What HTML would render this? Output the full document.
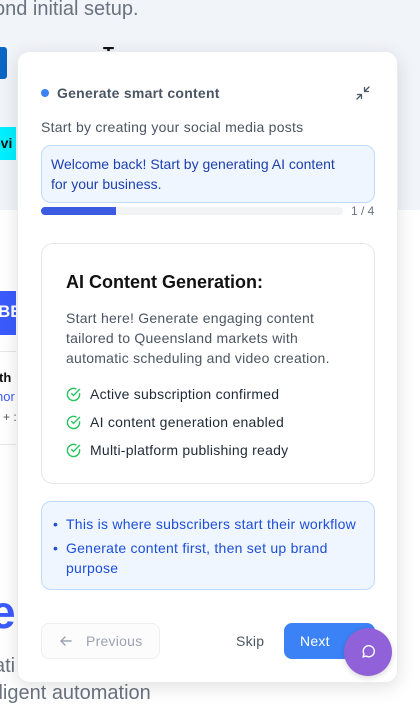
<!DOCTYPE html>
<html><head><style>
*{box-sizing:border-box;margin:0;padding:0}
body{width:420px;height:702px;overflow:hidden;font-family:"Liberation Sans",sans-serif;background:#fff;position:relative}
.bg{position:absolute;left:0;top:0;width:420px;height:210px;background:#f1f4f8}
.abs{position:absolute}
.card{position:absolute;left:17px;top:51px;width:381px;height:632px;background:#fff;border-radius:12px;box-shadow:0 4px 18px rgba(0,0,0,.12);border:1px solid #e9ecef}
.t{position:absolute;white-space:nowrap}
.ls{letter-spacing:0.25px}
</style></head><body>
<div class="bg"></div>
<div class="t" style="left:-6px;top:-2px;font-size:20px;color:#6b7280">ond initial setup.</div>
<div class="abs" style="left:0;top:47px;width:7px;height:32px;background:#0a66c2;border-radius:0 3px 3px 0"></div>
<div class="t" style="left:103px;top:44px;font-size:18px;font-weight:bold;color:#111">T</div>
<div class="abs" style="left:0;top:127px;width:16px;height:33px;background:#00f0ff"></div>
<div class="t" style="left:-4px;top:135px;font-size:14px;font-weight:bold;color:#111">-vi</div>
<div class="abs" style="left:0;top:291px;width:16px;height:44px;background:#3b5bfd"></div>
<div class="t" style="left:-2px;top:302px;font-size:17px;font-weight:bold;color:#fff">BE</div>
<div class="abs" style="left:0;top:351px;width:16px;height:1px;background:#e5e7eb"></div>
<div class="t" style="left:-6px;top:370px;font-size:13px;font-weight:bold;color:#111">rth</div>
<div class="t" style="left:-4px;top:389px;font-size:13px;color:#3b5bfd">nor</div>
<div class="t" style="left:3px;top:410px;font-size:12px;color:#555">+ :</div>
<div class="abs" style="left:0;top:444px;width:16px;height:1px;background:#e5e7eb"></div>
<div class="t" style="left:-10px;top:585px;font-size:46px;font-weight:bold;color:#3b5bfd">e</div>
<div class="t" style="left:-6px;top:655px;font-size:20px;color:#6b7280">ati</div>
<div class="t" style="left:-6px;top:682px;font-size:20px;color:#6b7280">lligent automation</div>

<div class="card"></div>
<div class="abs" style="left:41px;top:89px;width:8px;height:8px;border-radius:50%;background:#3b82f6"></div>
<div class="t ls" style="left:57px;top:85px;font-size:14px;font-weight:bold;color:#4b5563">Generate smart content</div>
<svg class="abs" style="left:355px;top:85px" width="16" height="16" viewBox="0 0 16 16" fill="none" stroke="#4b5563" stroke-width="1.3" stroke-linecap="round"><path d="M2 14l4.5-4.5M2.5 9.5h4v4M14 2L9.5 6.5M9.5 2.5v4h4"/></svg>
<div class="t ls" style="left:41px;top:119px;font-size:14px;color:#4b5563">Start by creating your social media posts</div>
<div class="abs" style="left:41px;top:145px;width:334px;height:58px;background:#eff6ff;border:1px solid #bfdbfe;border-radius:10px;padding:8px 25px 8px 9px;font-size:14px;line-height:20px;color:#1e40af">Welcome back! Start by generating AI content for your business.</div>
<div class="abs" style="left:41px;top:207px;width:302px;height:8px;background:#f1f3f5;border-radius:4px"></div>
<div class="abs" style="left:41px;top:207px;width:75px;height:8px;background:#3b5be0;border-radius:4px 0 0 4px"></div>
<div class="t" style="left:351px;top:204px;font-size:12px;color:#6b7280">1 / 4</div>

<div class="abs" style="left:41px;top:243px;width:334px;height:241px;border:1px solid #e5e7eb;border-radius:12px"></div>
<div class="t" style="left:66px;top:272px;font-size:18px;font-weight:bold;color:#111">AI Content Generation:</div>
<div class="abs ls" style="left:66px;top:308px;width:275px;font-size:14px;line-height:20px;color:#4b5563">Start here! Generate engaging content tailored to Queensland markets with automatic scheduling and video creation.</div>
<div class="abs ls" style="left:66px;top:380px;font-size:14px;color:#1f2937;line-height:28px">
<div style="display:flex;align-items:center;gap:9px"><svg width="15" height="15" viewBox="0 0 16 16" fill="none" stroke="#22c55e" stroke-width="1.5" stroke-linecap="round"><path d="M14.5 7.3V8a6.5 6.5 0 1 1-3.9-6"/><path d="M14.5 2.5L8 9 6 7"/></svg>Active subscription confirmed</div>
<div style="display:flex;align-items:center;gap:9px"><svg width="15" height="15" viewBox="0 0 16 16" fill="none" stroke="#22c55e" stroke-width="1.5" stroke-linecap="round"><path d="M14.5 7.3V8a6.5 6.5 0 1 1-3.9-6"/><path d="M14.5 2.5L8 9 6 7"/></svg>AI content generation enabled</div>
<div style="display:flex;align-items:center;gap:9px"><svg width="15" height="15" viewBox="0 0 16 16" fill="none" stroke="#22c55e" stroke-width="1.5" stroke-linecap="round"><path d="M14.5 7.3V8a6.5 6.5 0 1 1-3.9-6"/><path d="M14.5 2.5L8 9 6 7"/></svg>Multi-platform publishing ready</div>
</div>

<div class="abs" style="left:41px;top:501px;width:334px;height:89px;background:#eff6ff;border:1px solid #bfdbfe;border-radius:10px"></div>
<div class="abs ls" style="left:53px;top:514px;width:310px;font-size:14px;line-height:20px;color:#1d4ed8">
<div style="display:flex;margin-bottom:4px"><span style="width:13px">•</span><span>This is where subscribers start their workflow</span></div>
<div style="display:flex"><span style="width:13px;flex:none">•</span><span>Generate content first, then set up brand purpose</span></div>
</div>

<div class="abs" style="left:41px;top:623px;width:119px;height:36px;border:1px solid #eceef0;border-radius:8px;background:#fcfcfd"></div>
<svg class="abs" style="left:59px;top:634px" width="14" height="14" viewBox="0 0 14 14" fill="none" stroke="#9ca3af" stroke-width="1.4" stroke-linecap="round"><path d="M12 7H2M6 3L2 7l4 4"/></svg>
<div class="t ls" style="left:86px;top:633px;font-size:14px;color:#9ca3af">Previous</div>
<div class="t ls" style="left:236px;top:633px;font-size:14px;color:#4b5563">Skip</div>
<div class="abs" style="left:284px;top:623px;width:91px;height:36px;background:#3b82f6;border-radius:8px"></div>
<div class="t ls" style="left:300px;top:633px;font-size:14px;color:#fff">Next</div>
<div class="abs" style="left:344px;top:628px;width:48px;height:48px;border-radius:50%;background:#9061d8;box-shadow:0 2px 6px rgba(0,0,0,.15)"></div>
<svg class="abs" style="left:360px;top:644px" width="16" height="16" viewBox="0 0 16 16" fill="none" stroke="#fff" stroke-width="1.4" stroke-linejoin="round"><path d="M3 13l1-3a5.5 5.5 0 1 1 2 2z"/></svg>
</body></html>
